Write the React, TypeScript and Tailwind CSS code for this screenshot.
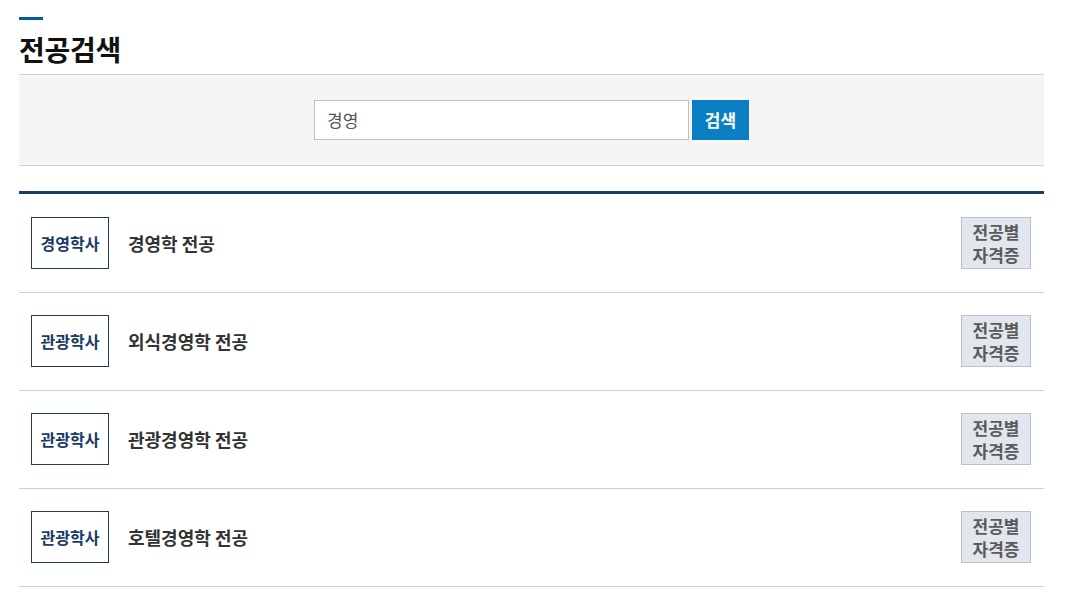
import React from 'react';

const font = { fontFamily: '"Noto Sans CJK KR", "Noto Sans", sans-serif' };

const majors = [
    { degree: '경영학사', name: '경영학 전공' },
    { degree: '관광학사', name: '외식경영학 전공' },
    { degree: '관광학사', name: '관광경영학 전공' },
    { degree: '관광학사', name: '호텔경영학 전공' },
];

export default function App() {
    return (
        <div className="min-h-screen bg-white px-[19px] pt-[17px] w-[1063px]" style={font}>
            {/* title */}
            <div className="w-6 h-[3px] bg-[#005f99]" />
            <h2 className="mt-[11px] text-[28px] leading-[36px] font-bold text-[#111] tracking-[-0.3px]">전공검색</h2>

            {/* search box */}
            <div className="mt-[7px] h-[92px] bg-[#f5f5f5] border-y border-[#d2d2d2] flex items-center justify-center gap-[3px]">
                <div className="w-[375px] h-10 bg-white border border-[#bdbdbd] flex items-center px-3 text-[17px] text-[#555]">
                    경영
                </div>
                <button className="w-[57px] h-10 bg-[#0a7fc4] text-white text-[17px] font-bold">검색</button>
            </div>

            {/* list */}
            <div className="mt-[25px] border-t-[3px] border-[#1b3a66]">
                {majors.map((m, i) => (
                    <div
                        key={i}
                        className={`flex items-center border-b border-[#cfcfcf] pl-3 pr-[13px] ${i === 0 ? 'pt-[23px] pb-[23px]' : 'pt-[22px] pb-[23px]'}`}
                    >
                        <div className="w-[78px] h-[52px] border border-[#1b3a66] flex items-center justify-center text-[16px] font-bold text-[#1b3a66]">
                            {m.degree}
                        </div>
                        <div className="ml-[19px] flex-1 text-[18px] font-bold text-[#333]">{m.name}</div>
                        <button className="w-[70px] h-[52px] bg-[#e2e6ed] border border-[#bac1cb] text-[17px] leading-[23px] font-bold text-[#5a5a5a] flex flex-col items-center justify-center">
                            <span>전공별</span>
                            <span>자격증</span>
                        </button>
                    </div>
                ))}
            </div>
        </div>
    );
}
